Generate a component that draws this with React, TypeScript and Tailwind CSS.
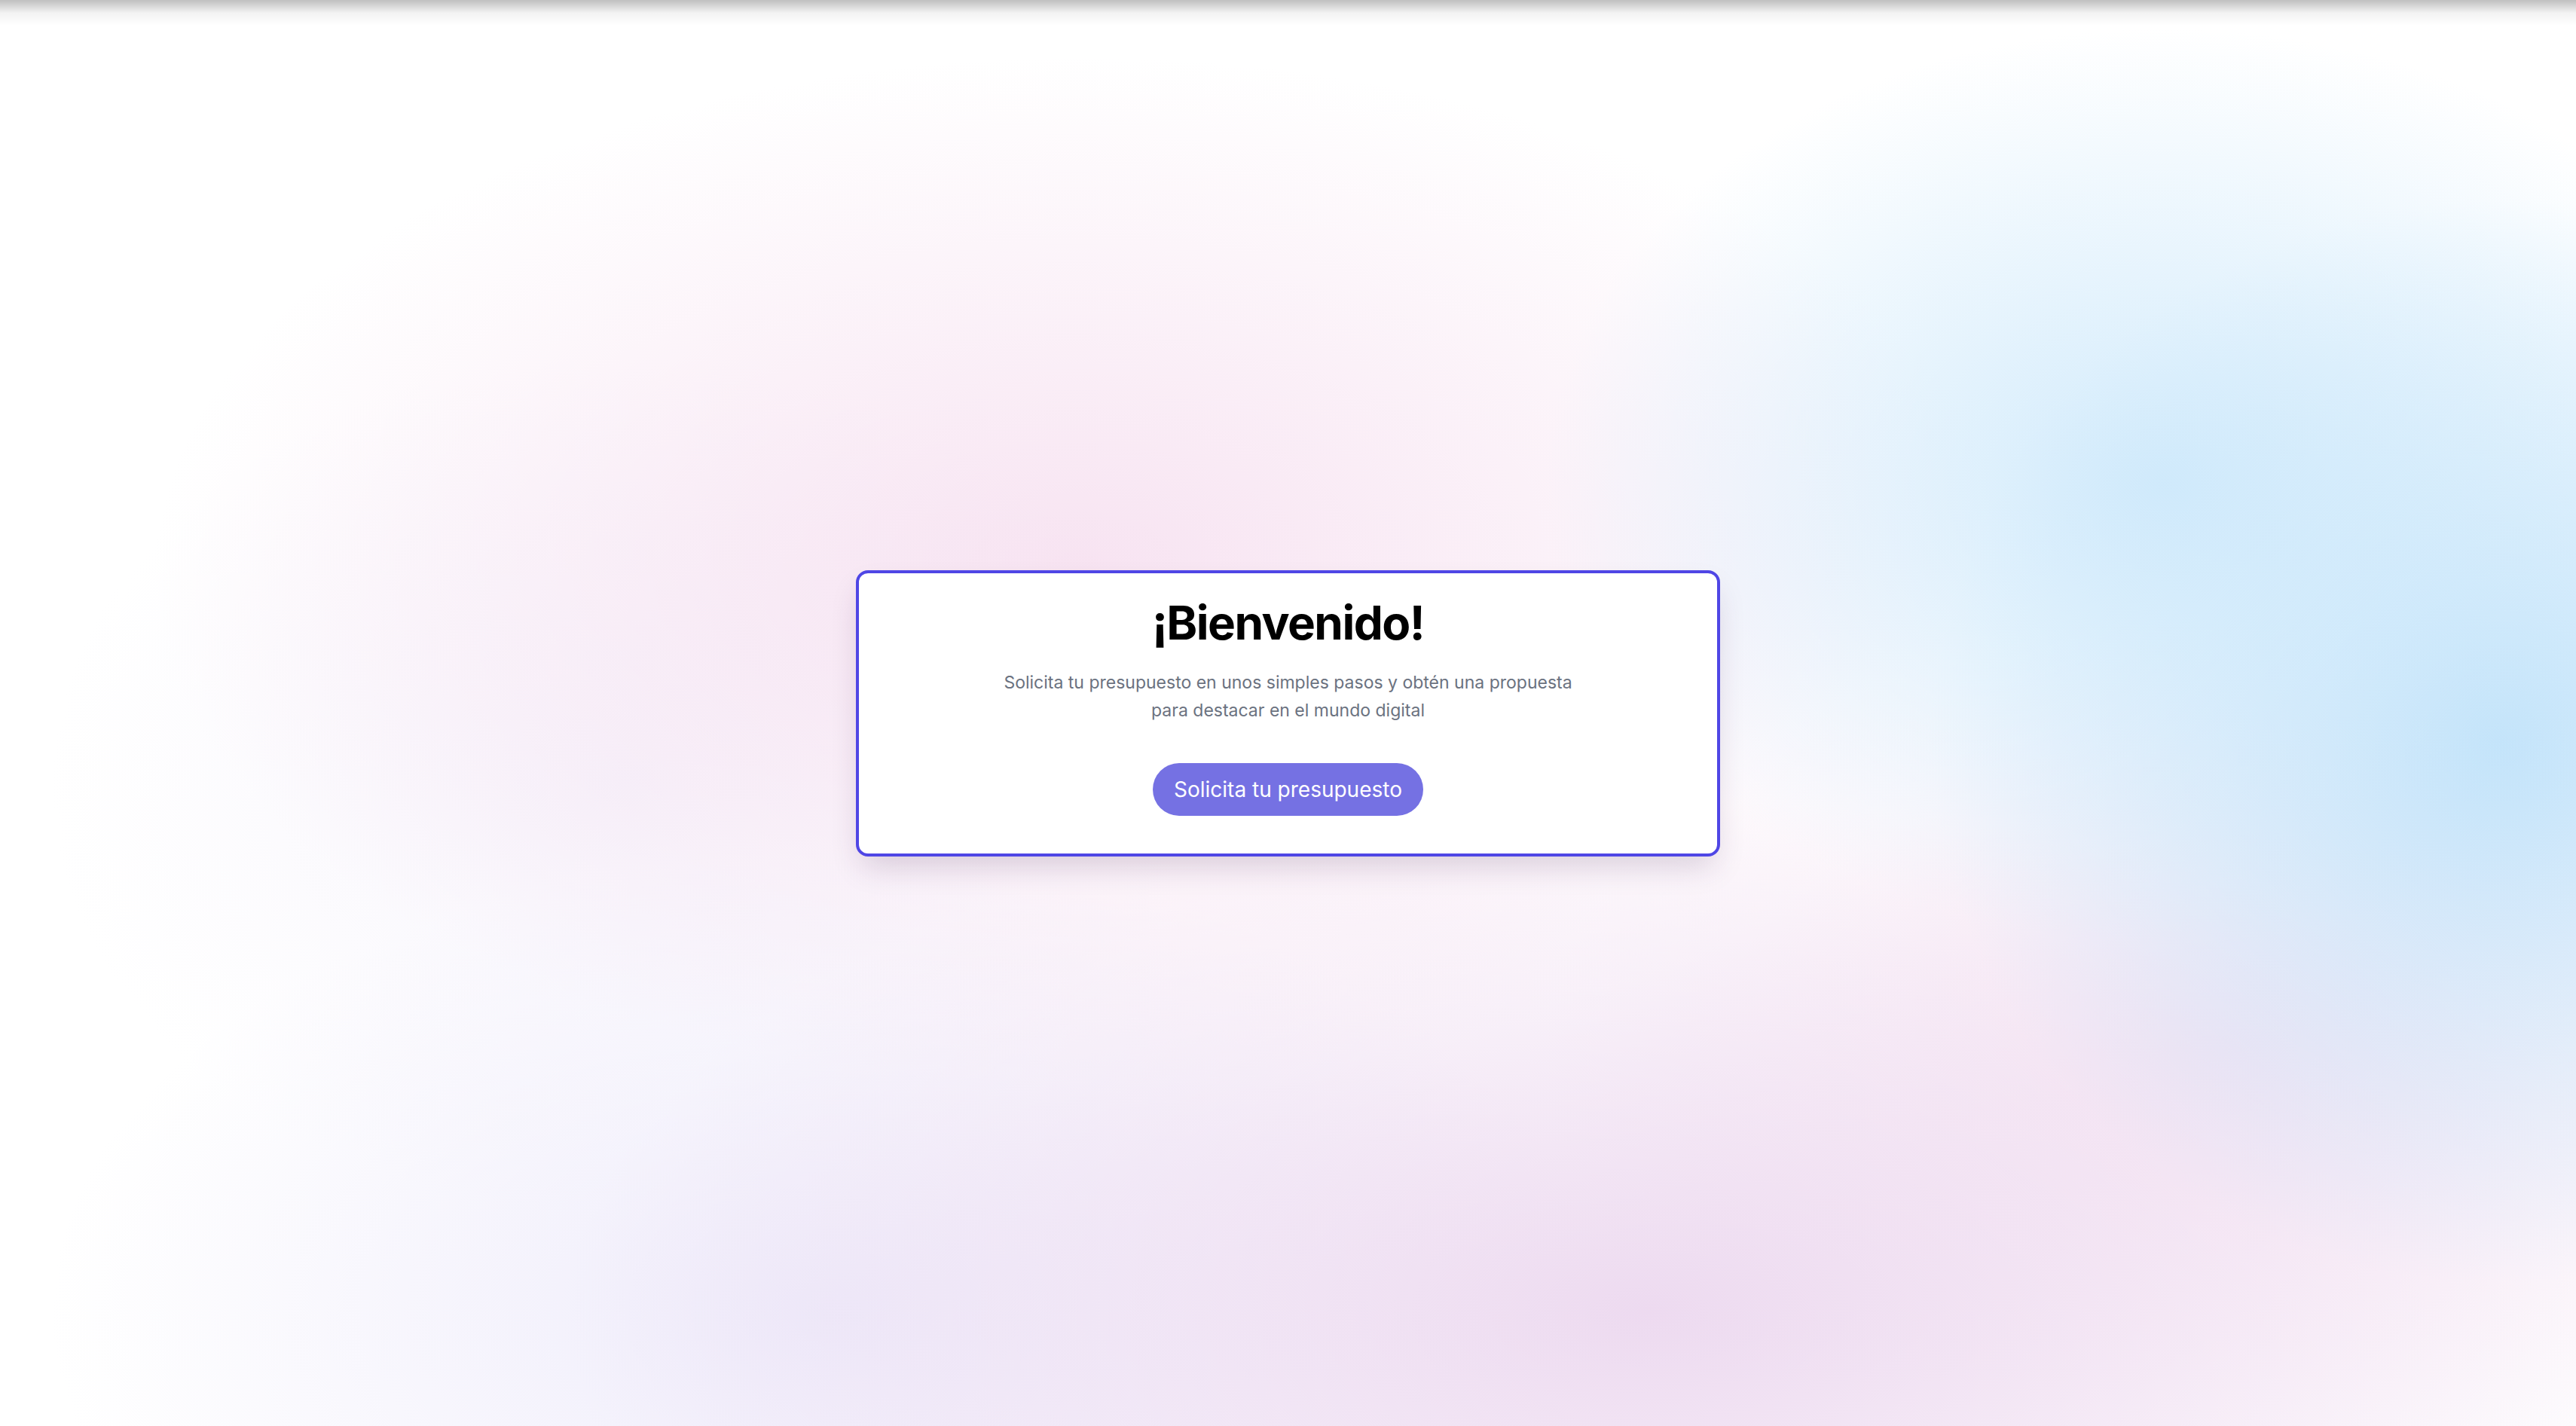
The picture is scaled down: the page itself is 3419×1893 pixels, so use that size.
import React from "react";

export default function App() {
  return (
    <div
      className="relative min-h-screen w-full overflow-hidden bg-white flex items-center justify-center"
      style={{ fontFamily: "Inter, 'Noto Sans', sans-serif" }}
    >
      <div className="pointer-events-none absolute inset-0 bg-[radial-gradient(ellipse_24%_32%_at_84%_34%,rgba(204,232,251,0.9),rgba(204,232,251,0)_100%),radial-gradient(ellipse_22%_38%_at_97%_52%,rgba(194,227,250,1),rgba(194,227,250,0)_100%),radial-gradient(ellipse_36%_36%_at_42%_40%,rgba(245,220,238,0.8),rgba(245,220,238,0)_100%),radial-gradient(ellipse_42%_36%_at_64%_92%,rgba(236,216,239,0.95),rgba(236,216,239,0)_100%),radial-gradient(ellipse_30%_32%_at_32%_92%,rgba(236,233,250,0.9),rgba(236,233,250,0)_100%),radial-gradient(ellipse_26%_30%_at_86%_74%,rgba(246,228,242,0.85),rgba(246,228,242,0)_100%),radial-gradient(ellipse_22%_30%_at_24%_55%,rgba(242,238,250,0.6),rgba(242,238,250,0)_100%)]" />
      <div className="pointer-events-none absolute inset-x-0 top-0 h-[34px] bg-linear-to-b from-black/25 via-black/5 to-transparent" />

      <div className="relative w-[1147px] rounded-2xl border-4 border-[#4f46e5] bg-white px-10 pt-[35px] pb-[50px] flex flex-col items-center text-center shadow-[0_20px_40px_-8px_rgba(60,30,80,0.18)]">
        <h1 className="text-[62px] leading-none font-bold tracking-tight text-black">
          ¡Bienvenido!
        </h1>
        <p className="mt-[30px] text-[23px] leading-[37px] text-[#6b7280]">
          Solicita tu presupuesto en unos simples pasos y obtén una propuesta
          <br />
          para destacar en el mundo digital
        </p>
        <button className="mt-[51px] h-[70px] rounded-full bg-[#7571e3] px-[28px] text-[28px] font-normal text-white">
          Solicita tu presupuesto
        </button>
      </div>
    </div>
  );
}
